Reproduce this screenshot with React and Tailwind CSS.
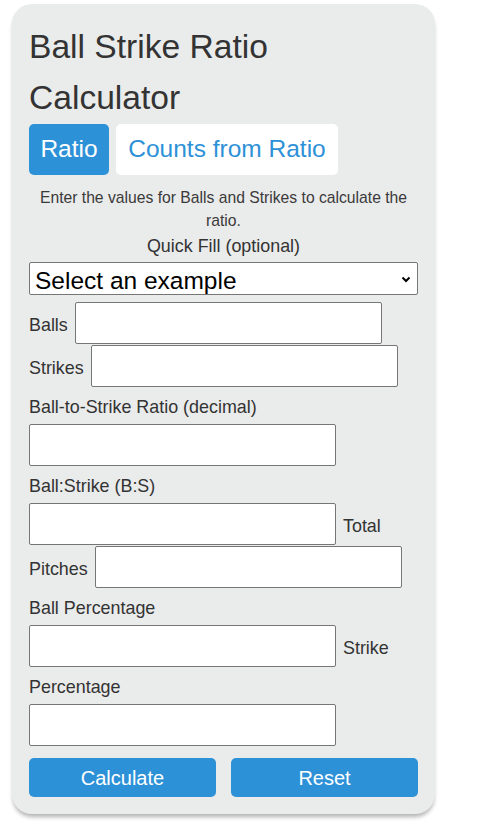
import React from "react";

const inputCls =
  "block w-[307px] h-[42px] shrink-0 rounded-[2px] border border-[#767676] bg-white px-2 text-[17.9px] text-black outline-none";

const FieldLabel = ({ children }) => (
  <div className="mt-[10px] mb-[6px] text-[17.9px] leading-[21px]">{children}</div>
);

const InlineRow = ({ label, trailing, className = "" }) => (
  <div className={`flex h-[42px] items-center ${className}`}>
    {label && (
      <span className="shrink-0 pt-[4px] pr-[7.5px] text-[17.9px] leading-[21px]">
        {label}
      </span>
    )}
    <input type="text" className={inputCls} />
    {trailing && (
      <span className="shrink-0 pt-[4px] pl-[7px] text-[17.9px] leading-[21px]">
        {trailing}
      </span>
    )}
  </div>
);

export default function App() {
  return (
    <div className="min-h-screen bg-white pl-[12px] pt-[4px] font-['Liberation_Sans',Arial,sans-serif]">
      <div className="w-[423px] rounded-[20px] bg-[#eaebeb] px-[17px] py-[17px] text-[#333] shadow-[0_4px_4px_-1px_rgba(0,0,0,0.3)]">
        {/* Titre */}
        <h1 className="text-[33.6px] font-normal leading-[51px]">
          Ball Strike Ratio Calculator
        </h1>

        {/* Onglets */}
        <div className="mt-px flex gap-[7px]">
          <button className="h-[50.5px] w-[80px] rounded-[5px] bg-[#2d91d8] text-[24.5px] text-white">
            Ratio
          </button>
          <button className="h-[50.5px] w-[222px] rounded-[5px] bg-white text-[24.5px] text-[#2d91d8]">
            Counts from Ratio
          </button>
        </div>

        <p className="mt-[11.5px] text-center text-[15.7px] leading-[23.4px] text-[#3a3a3a]">
          Enter the values for Balls and Strikes to calculate the ratio.
        </p>
        <p className="mt-[3px] text-center text-[17.9px] leading-[21px]">
          Quick Fill (optional)
        </p>

        {/* Select */}
        <div className="relative mt-[5.5px] h-[33px]">
          <select className="h-[33px] w-full appearance-none rounded-[2px] border border-[#767676] bg-white pl-[5px] text-[24.5px] text-black outline-none">
            <option>Select an example</option>
          </select>
          <svg
            className="pointer-events-none absolute right-[7px] top-[14px]"
            width="10"
            height="7"
            viewBox="0 0 10 7"
          >
            <polyline
              points="1.5,1.5 5,5 8.5,1.5"
              fill="none"
              stroke="#000"
              strokeWidth="2"
            />
          </svg>
        </div>

        {/* Champs */}
        <InlineRow label="Balls" className="mt-[7px]" />
        <InlineRow label="Strikes" className="mt-px" />

        <FieldLabel>Ball-to-Strike Ratio (decimal)</FieldLabel>
        <input type="text" className={inputCls} />

        <FieldLabel>Ball:Strike (B:S)</FieldLabel>
        <InlineRow trailing="Total" />
        <InlineRow label="Pitches" className="mt-px" />

        <FieldLabel>Ball Percentage</FieldLabel>
        <InlineRow trailing="Strike" />

        <FieldLabel>Percentage</FieldLabel>
        <input type="text" className={inputCls} />

        {/* Boutons */}
        <div className="mt-[12px] flex gap-[15px]">
          <button className="h-[39px] w-[187px] rounded-[5px] bg-[#2d91d8] text-[20px] text-white">
            Calculate
          </button>
          <button className="h-[39px] w-[187px] rounded-[5px] bg-[#2d91d8] text-[20px] text-white">
            Reset
          </button>
        </div>
      </div>
    </div>
  );
}
